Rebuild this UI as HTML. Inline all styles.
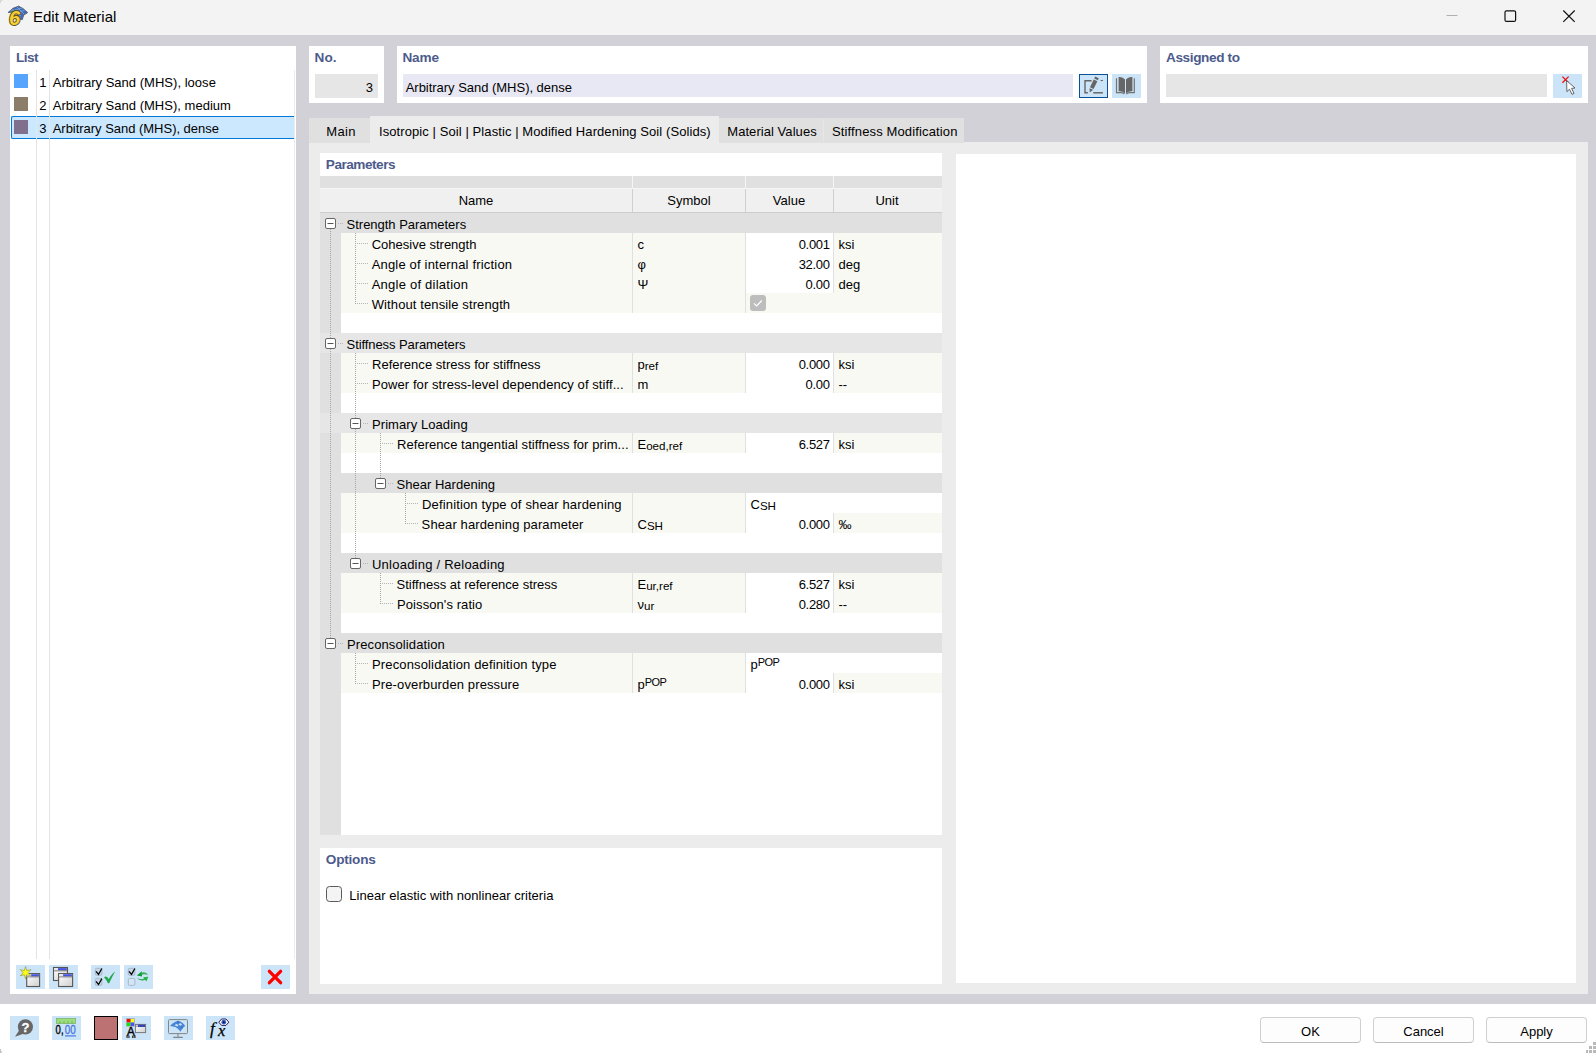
<!DOCTYPE html>
<html><head><meta charset="utf-8"><title>Edit Material</title>
<style>
html,body{margin:0;padding:0;}
body{width:1596px;height:1053px;overflow:hidden;background:#d1d1d7;font-family:"Liberation Sans",sans-serif;color:#000;position:relative;}
#w{position:absolute;left:0;top:0;width:1596px;height:1053px;overflow:hidden;}
#w div{position:absolute;box-sizing:border-box;}
#w svg{position:absolute;overflow:visible;}
.t{position:absolute;white-space:nowrap;}
.h{font-weight:bold;color:#4d5b8c;}
sub{font-size:11.6px;vertical-align:-1px;line-height:0;}
sup{font-size:11px;vertical-align:3px;letter-spacing:-0.6px;line-height:0;}
</style></head>
<body><div id="w">
<div style="left:0px;top:0px;width:1596px;height:35px;background:#f3f3f3;"></div>
<span class="t " style="top:9px;line-height:16px;font-size:15px;left:33px;">Edit Material</span>
<svg style="left:1440px;top:8px" width="150" height="20" viewBox="0 0 150 20"><path d="M6.5 7.5h11" stroke="#b0b0b0" stroke-width="1" fill="none"/><rect x="65" y="2.8" width="10.6" height="10.6" rx="1.5" stroke="#111" stroke-width="1.2" fill="none"/><path d="M123.3 2.5l11.4 11.4M134.7 2.5l-11.4 11.4" stroke="#111" stroke-width="1.2" fill="none"/></svg>
<div style="left:10px;top:46px;width:286px;height:948px;background:#fff;"></div>
<span class="t h" style="top:50px;line-height:16px;font-size:13.6px;left:15.9px;letter-spacing:-0.519px;">List</span>
<div style="left:36px;top:70px;width:1px;height:889px;background:#e3e3e3;"></div>
<div style="left:49px;top:70px;width:1px;height:889px;background:#e3e3e3;"></div>
<div style="left:11px;top:116px;width:283px;height:23px;background:#cce8ff;border-top:1px solid #0078d7;border-bottom:1px solid #0078d7;border-left:1px solid #0078d7;border-radius:2px 0 0 2px;"></div>
<div style="left:14px;top:74px;width:14px;height:14px;background:#55a5ff;"></div>
<span class="t " style="top:75px;line-height:16px;font-size:13px;right:1549.5px;">1</span>
<span class="t " style="top:75px;line-height:16px;font-size:13px;left:52.7px;letter-spacing:0.024px;">Arbitrary Sand (MHS), loose</span>
<div style="left:14px;top:97px;width:14px;height:14px;background:#8b7d69;"></div>
<span class="t " style="top:98px;line-height:16px;font-size:13px;right:1549.5px;">2</span>
<span class="t " style="top:98px;line-height:16px;font-size:13px;left:52.7px;letter-spacing:0.018px;">Arbitrary Sand (MHS), medium</span>
<div style="left:14px;top:120px;width:14px;height:14px;background:#80708e;"></div>
<span class="t " style="top:121px;line-height:16px;font-size:13px;right:1549.5px;">3</span>
<span class="t " style="top:121px;line-height:16px;font-size:13px;left:52.7px;letter-spacing:-0.025px;">Arbitrary Sand (MHS), dense</span>
<div style="left:294px;top:70px;width:1px;height:889px;background:#ececec;"></div>
<div style="left:36px;top:116px;width:1px;height:23px;background:#e1e8ef;"></div>
<div style="left:49px;top:116px;width:1px;height:23px;background:#e1e8ef;"></div>
<div style="left:16px;top:965px;width:29px;height:24px;background:#cce4f7;"></div>
<div style="left:49px;top:965px;width:29px;height:24px;background:#cce4f7;"></div>
<div style="left:91px;top:965px;width:29px;height:24px;background:#cce4f7;"></div>
<div style="left:124px;top:965px;width:29px;height:24px;background:#cce4f7;"></div>
<div style="left:261px;top:965px;width:29px;height:24px;background:#cce4f7;"></div>
<div style="left:309px;top:46px;width:75px;height:57px;background:#fff;"></div>
<span class="t h" style="top:50px;line-height:16px;font-size:13.6px;left:314.5px;letter-spacing:0.064px;">No.</span>
<div style="left:315px;top:74px;width:63px;height:24px;background:#e6e6e6;"></div>
<span class="t " style="top:80px;line-height:16px;font-size:13px;right:1223px;">3</span>
<div style="left:397px;top:46px;width:750px;height:57px;background:#fff;"></div>
<span class="t h" style="top:50px;line-height:16px;font-size:13.6px;left:402.4px;letter-spacing:-0.085px;">Name</span>
<div style="left:403px;top:74px;width:670px;height:23px;background:#e8e8f4;"></div>
<span class="t " style="top:80px;line-height:16px;font-size:13px;left:405.7px;letter-spacing:-0.025px;">Arbitrary Sand (MHS), dense</span>
<div style="left:1079px;top:74px;width:29px;height:24px;background:#cce4f7;border:1px solid #0a4f9a;"></div>
<div style="left:1112px;top:74px;width:29px;height:24px;background:#cce4f7;"></div>
<div style="left:1160px;top:46px;width:428px;height:57px;background:#fff;"></div>
<span class="t h" style="top:50px;line-height:16px;font-size:13.6px;left:1166px;letter-spacing:-0.384px;">Assigned to</span>
<div style="left:1166px;top:74px;width:381px;height:23px;background:#e6e6e6;"></div>
<div style="left:1553px;top:74px;width:29px;height:24px;background:#cce4f7;"></div>
<div style="left:309px;top:142px;width:1279px;height:852px;background:#ececec;"></div>
<div style="left:309px;top:118px;width:655px;height:25px;background:#e0e0e0;"></div>
<div style="left:823px;top:119px;width:1px;height:23px;background:#e7e7e7;"></div>
<div style="left:370px;top:116px;width:349px;height:28px;background:#ececec;"></div>
<span class="t " style="top:124px;line-height:16px;font-size:13px;left:326.3px;letter-spacing:0.306px;">Main</span>
<span class="t " style="top:124px;line-height:16px;font-size:13px;left:379.0px;letter-spacing:0.084px;">Isotropic | Soil | Plastic | Modified Hardening Soil (Solids)</span>
<span class="t " style="top:124px;line-height:16px;font-size:13px;left:727.3px;letter-spacing:0.052px;">Material Values</span>
<span class="t " style="top:124px;line-height:16px;font-size:13px;left:832.0px;letter-spacing:0.132px;">Stiffness Modification</span>
<div style="left:956px;top:154px;width:620px;height:829px;background:#fff;"></div>
<div style="left:320px;top:153px;width:622px;height:682px;background:#fff;"></div>
<span class="t h" style="top:157px;line-height:16px;font-size:13.6px;left:325.8px;letter-spacing:-0.479px;">Parameters</span>
<div style="left:320px;top:176px;width:622px;height:12px;background:#e0e0e0;"></div>
<div style="left:632px;top:176px;width:1px;height:12px;background:#f5f5f5;"></div>
<div style="left:745px;top:176px;width:1px;height:12px;background:#f5f5f5;"></div>
<div style="left:833px;top:176px;width:1px;height:12px;background:#f5f5f5;"></div>
<div style="left:320px;top:188px;width:622px;height:24px;background:#f0f0f0;"></div>
<div style="left:320px;top:188px;width:622px;height:1px;background:#f6f6f6;"></div>
<div style="left:632px;top:189px;width:1px;height:23px;background:#d0d0d0;"></div>
<div style="left:745px;top:189px;width:1px;height:23px;background:#d0d0d0;"></div>
<div style="left:833px;top:189px;width:1px;height:23px;background:#d0d0d0;"></div>
<div style="left:320px;top:212px;width:622px;height:1px;background:#cdcdcd;"></div>
<span class="t " style="top:193px;line-height:16px;font-size:13px;left:326px;width:300px;text-align:center;">Name</span>
<span class="t " style="top:193px;line-height:16px;font-size:13px;left:539px;width:300px;text-align:center;">Symbol</span>
<span class="t " style="top:193px;line-height:16px;font-size:13px;left:639px;width:300px;text-align:center;">Value</span>
<span class="t " style="top:193px;line-height:16px;font-size:13px;left:737px;width:300px;text-align:center;">Unit</span>
<div style="left:320px;top:213px;width:21px;height:622px;background:#e0e0e0;"></div>
<div style="left:320px;top:213px;width:622px;height:20px;background:#e0e0e0;"></div>
<span class="t " style="top:217px;line-height:16px;font-size:13px;left:346.6px;letter-spacing:-0.023px;">Strength Parameters</span>
<div style="left:341px;top:233px;width:601px;height:20px;background:#f9f9f4;"></div>
<div style="left:632px;top:233px;width:1px;height:20px;background:#e0e0e0;"></div>
<div style="left:745px;top:233px;width:1px;height:20px;background:#e0e0e0;"></div>
<span class="t " style="top:237px;line-height:16px;font-size:13px;left:371.7px;letter-spacing:-0.004px;">Cohesive strength</span>
<div style="left:746px;top:233px;width:87px;height:20px;background:#fff;"></div>
<div style="left:833px;top:233px;width:1px;height:20px;background:#e0e0e0;"></div>
<span class="t " style="top:237px;line-height:16px;font-size:13px;left:637.5px;">c</span>
<span class="t " style="top:237px;line-height:16px;font-size:13px;right:766.3px;letter-spacing:-0.3px;">0.001</span>
<span class="t " style="top:237px;line-height:16px;font-size:13px;left:838.5px;">ksi</span>
<div style="left:341px;top:253px;width:601px;height:20px;background:#f9f9f4;"></div>
<div style="left:632px;top:253px;width:1px;height:20px;background:#e0e0e0;"></div>
<div style="left:745px;top:253px;width:1px;height:20px;background:#e0e0e0;"></div>
<span class="t " style="top:257px;line-height:16px;font-size:13px;left:371.7px;letter-spacing:0.179px;">Angle of internal friction</span>
<div style="left:746px;top:253px;width:87px;height:20px;background:#fff;"></div>
<div style="left:833px;top:253px;width:1px;height:20px;background:#e0e0e0;"></div>
<span class="t " style="top:257px;line-height:16px;font-size:13px;left:637.5px;">φ</span>
<span class="t " style="top:257px;line-height:16px;font-size:13px;right:766.3px;letter-spacing:-0.3px;">32.00</span>
<span class="t " style="top:257px;line-height:16px;font-size:13px;left:838.5px;">deg</span>
<div style="left:341px;top:273px;width:601px;height:20px;background:#f9f9f4;"></div>
<div style="left:632px;top:273px;width:1px;height:20px;background:#e0e0e0;"></div>
<div style="left:745px;top:273px;width:1px;height:20px;background:#e0e0e0;"></div>
<span class="t " style="top:277px;line-height:16px;font-size:13px;left:371.7px;letter-spacing:0.235px;">Angle of dilation</span>
<div style="left:746px;top:273px;width:87px;height:20px;background:#fff;"></div>
<div style="left:833px;top:273px;width:1px;height:20px;background:#e0e0e0;"></div>
<span class="t " style="top:277px;line-height:16px;font-size:13px;left:637.5px;">Ψ</span>
<span class="t " style="top:277px;line-height:16px;font-size:13px;right:766.3px;letter-spacing:-0.3px;">0.00</span>
<span class="t " style="top:277px;line-height:16px;font-size:13px;left:838.5px;">deg</span>
<div style="left:341px;top:293px;width:601px;height:20px;background:#f9f9f4;"></div>
<div style="left:632px;top:293px;width:1px;height:20px;background:#e0e0e0;"></div>
<div style="left:745px;top:293px;width:1px;height:20px;background:#e0e0e0;"></div>
<span class="t " style="top:297px;line-height:16px;font-size:13px;left:371.7px;letter-spacing:0.111px;">Without tensile strength</span>
<svg style="left:750px;top:295px" width="16" height="16" viewBox="0 0 16 16"><rect x="0" y="0" width="16" height="16" rx="3" fill="#bdbdbd"/><path d="M4 8.3l2.6 2.6 5.2-5.4" stroke="#fff" stroke-width="1.2" fill="none"/></svg>
<div style="left:320px;top:333px;width:622px;height:20px;background:#e6e6e6;"></div>
<span class="t " style="top:337px;line-height:16px;font-size:13px;left:346.6px;letter-spacing:-0.086px;">Stiffness Parameters</span>
<div style="left:341px;top:353px;width:601px;height:20px;background:#f9f9f4;"></div>
<div style="left:632px;top:353px;width:1px;height:20px;background:#e0e0e0;"></div>
<div style="left:745px;top:353px;width:1px;height:20px;background:#e0e0e0;"></div>
<span class="t " style="top:357px;line-height:16px;font-size:13px;left:372.0px;letter-spacing:0.017px;">Reference stress for stiffness</span>
<div style="left:746px;top:353px;width:87px;height:20px;background:#fff;"></div>
<div style="left:833px;top:353px;width:1px;height:20px;background:#e0e0e0;"></div>
<span class="t " style="top:357px;line-height:16px;font-size:13px;left:637.5px;">p<sub>ref</sub></span>
<span class="t " style="top:357px;line-height:16px;font-size:13px;right:766.3px;letter-spacing:-0.3px;">0.000</span>
<span class="t " style="top:357px;line-height:16px;font-size:13px;left:838.5px;">ksi</span>
<div style="left:341px;top:373px;width:601px;height:20px;background:#f9f9f4;"></div>
<div style="left:632px;top:373px;width:1px;height:20px;background:#e0e0e0;"></div>
<div style="left:745px;top:373px;width:1px;height:20px;background:#e0e0e0;"></div>
<span class="t " style="top:377px;line-height:16px;font-size:13px;left:372.0px;letter-spacing:0.075px;">Power for stress-level dependency of stiff...</span>
<div style="left:746px;top:373px;width:87px;height:20px;background:#fff;"></div>
<div style="left:833px;top:373px;width:1px;height:20px;background:#e0e0e0;"></div>
<span class="t " style="top:377px;line-height:16px;font-size:13px;left:637.5px;">m</span>
<span class="t " style="top:377px;line-height:16px;font-size:13px;right:766.3px;letter-spacing:-0.3px;">0.00</span>
<span class="t " style="top:377px;line-height:16px;font-size:13px;left:838.5px;">--</span>
<div style="left:320px;top:413px;width:622px;height:20px;background:#e6e6e6;"></div>
<span class="t " style="top:417px;line-height:16px;font-size:13px;left:372.0px;letter-spacing:0.070px;">Primary Loading</span>
<div style="left:341px;top:433px;width:601px;height:20px;background:#f9f9f4;"></div>
<div style="left:632px;top:433px;width:1px;height:20px;background:#e0e0e0;"></div>
<div style="left:745px;top:433px;width:1px;height:20px;background:#e0e0e0;"></div>
<span class="t " style="top:437px;line-height:16px;font-size:13px;left:397.0px;letter-spacing:0.049px;">Reference tangential stiffness for prim...</span>
<div style="left:746px;top:433px;width:87px;height:20px;background:#fff;"></div>
<div style="left:833px;top:433px;width:1px;height:20px;background:#e0e0e0;"></div>
<span class="t " style="top:437px;line-height:16px;font-size:13px;left:637.5px;">E<sub>oed,ref</sub></span>
<span class="t " style="top:437px;line-height:16px;font-size:13px;right:766.3px;letter-spacing:-0.3px;">6.527</span>
<span class="t " style="top:437px;line-height:16px;font-size:13px;left:838.5px;">ksi</span>
<div style="left:341px;top:473px;width:601px;height:20px;background:#e0e0e0;"></div>
<span class="t " style="top:477px;line-height:16px;font-size:13px;left:396.6px;letter-spacing:0.008px;">Shear Hardening</span>
<div style="left:341px;top:493px;width:601px;height:20px;background:#f9f9f4;"></div>
<div style="left:632px;top:493px;width:1px;height:20px;background:#e0e0e0;"></div>
<div style="left:745px;top:493px;width:1px;height:20px;background:#e0e0e0;"></div>
<span class="t " style="top:497px;line-height:16px;font-size:13px;left:422.0px;letter-spacing:0.156px;">Definition type of shear hardening</span>
<div style="left:746px;top:493px;width:196px;height:20px;background:#fff;"></div>
<span class="t " style="top:497px;line-height:16px;font-size:13px;left:750.5px;">C<sub>SH</sub></span>
<div style="left:341px;top:513px;width:601px;height:20px;background:#f9f9f4;"></div>
<div style="left:632px;top:513px;width:1px;height:20px;background:#e0e0e0;"></div>
<div style="left:745px;top:513px;width:1px;height:20px;background:#e0e0e0;"></div>
<span class="t " style="top:517px;line-height:16px;font-size:13px;left:421.6px;letter-spacing:0.117px;">Shear hardening parameter</span>
<div style="left:746px;top:513px;width:87px;height:20px;background:#fff;"></div>
<div style="left:833px;top:513px;width:1px;height:20px;background:#e0e0e0;"></div>
<span class="t " style="top:517px;line-height:16px;font-size:13px;left:637.5px;">C<sub>SH</sub></span>
<span class="t " style="top:517px;line-height:16px;font-size:13px;right:766.3px;letter-spacing:-0.3px;">0.000</span>
<span class="t " style="top:517px;line-height:16px;font-size:13px;left:838.5px;">‰</span>
<div style="left:341px;top:553px;width:601px;height:20px;background:#e0e0e0;"></div>
<span class="t " style="top:557px;line-height:16px;font-size:13px;left:372.0px;letter-spacing:0.233px;">Unloading / Reloading</span>
<div style="left:341px;top:573px;width:601px;height:20px;background:#f9f9f4;"></div>
<div style="left:632px;top:573px;width:1px;height:20px;background:#e0e0e0;"></div>
<div style="left:745px;top:573px;width:1px;height:20px;background:#e0e0e0;"></div>
<span class="t " style="top:577px;line-height:16px;font-size:13px;left:396.6px;letter-spacing:-0.006px;">Stiffness at reference stress</span>
<div style="left:746px;top:573px;width:87px;height:20px;background:#fff;"></div>
<div style="left:833px;top:573px;width:1px;height:20px;background:#e0e0e0;"></div>
<span class="t " style="top:577px;line-height:16px;font-size:13px;left:637.5px;">E<sub>ur,ref</sub></span>
<span class="t " style="top:577px;line-height:16px;font-size:13px;right:766.3px;letter-spacing:-0.3px;">6.527</span>
<span class="t " style="top:577px;line-height:16px;font-size:13px;left:838.5px;">ksi</span>
<div style="left:341px;top:593px;width:601px;height:20px;background:#f9f9f4;"></div>
<div style="left:632px;top:593px;width:1px;height:20px;background:#e0e0e0;"></div>
<div style="left:745px;top:593px;width:1px;height:20px;background:#e0e0e0;"></div>
<span class="t " style="top:597px;line-height:16px;font-size:13px;left:397.0px;letter-spacing:0.085px;">Poisson's ratio</span>
<div style="left:746px;top:593px;width:87px;height:20px;background:#fff;"></div>
<div style="left:833px;top:593px;width:1px;height:20px;background:#e0e0e0;"></div>
<span class="t " style="top:597px;line-height:16px;font-size:13px;left:637.5px;">ν<sub>ur</sub></span>
<span class="t " style="top:597px;line-height:16px;font-size:13px;right:766.3px;letter-spacing:-0.3px;">0.280</span>
<span class="t " style="top:597px;line-height:16px;font-size:13px;left:838.5px;">--</span>
<div style="left:320px;top:633px;width:622px;height:20px;background:#e0e0e0;"></div>
<span class="t " style="top:637px;line-height:16px;font-size:13px;left:347.0px;letter-spacing:0.112px;">Preconsolidation</span>
<div style="left:341px;top:653px;width:601px;height:20px;background:#f9f9f4;"></div>
<div style="left:632px;top:653px;width:1px;height:20px;background:#e0e0e0;"></div>
<div style="left:745px;top:653px;width:1px;height:20px;background:#e0e0e0;"></div>
<span class="t " style="top:657px;line-height:16px;font-size:13px;left:372.0px;letter-spacing:0.143px;">Preconsolidation definition type</span>
<div style="left:746px;top:653px;width:196px;height:20px;background:#fff;"></div>
<span class="t " style="top:657px;line-height:16px;font-size:13px;left:750.5px;">p<sup>POP</sup></span>
<div style="left:341px;top:673px;width:601px;height:20px;background:#f9f9f4;"></div>
<div style="left:632px;top:673px;width:1px;height:20px;background:#e0e0e0;"></div>
<div style="left:745px;top:673px;width:1px;height:20px;background:#e0e0e0;"></div>
<span class="t " style="top:677px;line-height:16px;font-size:13px;left:372.0px;letter-spacing:0.126px;">Pre-overburden pressure</span>
<div style="left:746px;top:673px;width:87px;height:20px;background:#fff;"></div>
<div style="left:833px;top:673px;width:1px;height:20px;background:#e0e0e0;"></div>
<span class="t " style="top:677px;line-height:16px;font-size:13px;left:637.5px;">p<sup>POP</sup></span>
<span class="t " style="top:677px;line-height:16px;font-size:13px;right:766.3px;letter-spacing:-0.3px;">0.000</span>
<span class="t " style="top:677px;line-height:16px;font-size:13px;left:838.5px;">ksi</span>
<div style="left:338px;top:223px;width:5px;height:1px;background:repeating-linear-gradient(to right,#b6b6b6 0 1px,transparent 1px 2px);"></div>
<div style="left:357px;top:243px;width:11px;height:1px;background:repeating-linear-gradient(to right,#b6b6b6 0 1px,transparent 1px 2px);"></div>
<div style="left:357px;top:263px;width:11px;height:1px;background:repeating-linear-gradient(to right,#b6b6b6 0 1px,transparent 1px 2px);"></div>
<div style="left:357px;top:283px;width:11px;height:1px;background:repeating-linear-gradient(to right,#b6b6b6 0 1px,transparent 1px 2px);"></div>
<div style="left:357px;top:303px;width:11px;height:1px;background:repeating-linear-gradient(to right,#b6b6b6 0 1px,transparent 1px 2px);"></div>
<div style="left:338px;top:343px;width:5px;height:1px;background:repeating-linear-gradient(to right,#b6b6b6 0 1px,transparent 1px 2px);"></div>
<div style="left:357px;top:363px;width:11px;height:1px;background:repeating-linear-gradient(to right,#b6b6b6 0 1px,transparent 1px 2px);"></div>
<div style="left:357px;top:383px;width:11px;height:1px;background:repeating-linear-gradient(to right,#b6b6b6 0 1px,transparent 1px 2px);"></div>
<div style="left:363px;top:423px;width:5px;height:1px;background:repeating-linear-gradient(to right,#b6b6b6 0 1px,transparent 1px 2px);"></div>
<div style="left:382px;top:443px;width:11px;height:1px;background:repeating-linear-gradient(to right,#b6b6b6 0 1px,transparent 1px 2px);"></div>
<div style="left:388px;top:483px;width:5px;height:1px;background:repeating-linear-gradient(to right,#b6b6b6 0 1px,transparent 1px 2px);"></div>
<div style="left:407px;top:503px;width:11px;height:1px;background:repeating-linear-gradient(to right,#b6b6b6 0 1px,transparent 1px 2px);"></div>
<div style="left:407px;top:523px;width:11px;height:1px;background:repeating-linear-gradient(to right,#b6b6b6 0 1px,transparent 1px 2px);"></div>
<div style="left:363px;top:563px;width:5px;height:1px;background:repeating-linear-gradient(to right,#b6b6b6 0 1px,transparent 1px 2px);"></div>
<div style="left:382px;top:583px;width:11px;height:1px;background:repeating-linear-gradient(to right,#b6b6b6 0 1px,transparent 1px 2px);"></div>
<div style="left:382px;top:603px;width:11px;height:1px;background:repeating-linear-gradient(to right,#b6b6b6 0 1px,transparent 1px 2px);"></div>
<div style="left:338px;top:643px;width:5px;height:1px;background:repeating-linear-gradient(to right,#b6b6b6 0 1px,transparent 1px 2px);"></div>
<div style="left:357px;top:663px;width:11px;height:1px;background:repeating-linear-gradient(to right,#b6b6b6 0 1px,transparent 1px 2px);"></div>
<div style="left:357px;top:683px;width:11px;height:1px;background:repeating-linear-gradient(to right,#b6b6b6 0 1px,transparent 1px 2px);"></div>
<div style="left:330px;top:229px;width:1px;height:409px;background:repeating-linear-gradient(to bottom,#a6a6a6 0 1px,transparent 1px 2px);"></div>
<div style="left:355px;top:233px;width:1px;height:71px;background:repeating-linear-gradient(to bottom,#a6a6a6 0 1px,transparent 1px 2px);"></div>
<div style="left:355px;top:353px;width:1px;height:205px;background:repeating-linear-gradient(to bottom,#a6a6a6 0 1px,transparent 1px 2px);"></div>
<div style="left:380px;top:433px;width:1px;height:45px;background:repeating-linear-gradient(to bottom,#a6a6a6 0 1px,transparent 1px 2px);"></div>
<div style="left:405px;top:493px;width:1px;height:31px;background:repeating-linear-gradient(to bottom,#a6a6a6 0 1px,transparent 1px 2px);"></div>
<div style="left:380px;top:573px;width:1px;height:31px;background:repeating-linear-gradient(to bottom,#a6a6a6 0 1px,transparent 1px 2px);"></div>
<div style="left:355px;top:653px;width:1px;height:31px;background:repeating-linear-gradient(to bottom,#a6a6a6 0 1px,transparent 1px 2px);"></div>
<svg style="left:325px;top:218px" width="11" height="11" viewBox="0 0 11 11"><rect x="0.5" y="0.5" width="10" height="10" rx="1.5" fill="#fff" stroke="#666" stroke-width="1"/><path d="M2.5 5.5h6" stroke="#555" stroke-width="1"/></svg>
<svg style="left:325px;top:338px" width="11" height="11" viewBox="0 0 11 11"><rect x="0.5" y="0.5" width="10" height="10" rx="1.5" fill="#fff" stroke="#666" stroke-width="1"/><path d="M2.5 5.5h6" stroke="#555" stroke-width="1"/></svg>
<svg style="left:350px;top:418px" width="11" height="11" viewBox="0 0 11 11"><rect x="0.5" y="0.5" width="10" height="10" rx="1.5" fill="#fff" stroke="#666" stroke-width="1"/><path d="M2.5 5.5h6" stroke="#555" stroke-width="1"/></svg>
<svg style="left:375px;top:478px" width="11" height="11" viewBox="0 0 11 11"><rect x="0.5" y="0.5" width="10" height="10" rx="1.5" fill="#fff" stroke="#666" stroke-width="1"/><path d="M2.5 5.5h6" stroke="#555" stroke-width="1"/></svg>
<svg style="left:350px;top:558px" width="11" height="11" viewBox="0 0 11 11"><rect x="0.5" y="0.5" width="10" height="10" rx="1.5" fill="#fff" stroke="#666" stroke-width="1"/><path d="M2.5 5.5h6" stroke="#555" stroke-width="1"/></svg>
<svg style="left:325px;top:638px" width="11" height="11" viewBox="0 0 11 11"><rect x="0.5" y="0.5" width="10" height="10" rx="1.5" fill="#fff" stroke="#666" stroke-width="1"/><path d="M2.5 5.5h6" stroke="#555" stroke-width="1"/></svg>
<div style="left:320px;top:848px;width:622px;height:136px;background:#fff;"></div>
<span class="t h" style="top:852px;line-height:16px;font-size:13.6px;left:325.8px;letter-spacing:-0.224px;">Options</span>
<div style="left:326px;top:886px;width:16px;height:16px;background:#f4f4f4;border:1px solid #5a5a5a;border-radius:3.5px;"></div>
<span class="t " style="top:888px;line-height:16px;font-size:13px;left:349.3px;letter-spacing:0.028px;">Linear elastic with nonlinear criteria</span>
<div style="left:0px;top:1004px;width:1596px;height:49px;background:#ffffff;"></div>
<div style="left:10px;top:1016px;width:29px;height:24px;background:#cce4f7;"></div>
<div style="left:52px;top:1016px;width:29px;height:24px;background:#cce4f7;"></div>
<div style="left:122px;top:1016px;width:29px;height:24px;background:#cce4f7;"></div>
<div style="left:164px;top:1016px;width:29px;height:24px;background:#cce4f7;"></div>
<div style="left:206px;top:1016px;width:29px;height:24px;background:#cce4f7;"></div>
<div style="left:94px;top:1016px;width:24px;height:24px;background:#bc7272;border:1px solid #000;"></div>
<div style="left:1260px;top:1017px;width:101px;height:26px;background:#fdfdfd;border:1px solid #d0d0d0;border-bottom-color:#bcbcbc;border-radius:4px;"></div>
<span class="t " style="top:1024px;line-height:16px;font-size:13px;left:1160.5px;width:300px;text-align:center;">OK</span>
<div style="left:1373px;top:1017px;width:101px;height:26px;background:#fdfdfd;border:1px solid #d0d0d0;border-bottom-color:#bcbcbc;border-radius:4px;"></div>
<span class="t " style="top:1024px;line-height:16px;font-size:13px;left:1273.5px;width:300px;text-align:center;">Cancel</span>
<div style="left:1486px;top:1017px;width:101px;height:26px;background:#fdfdfd;border:1px solid #d0d0d0;border-bottom-color:#bcbcbc;border-radius:4px;"></div>
<span class="t " style="top:1024px;line-height:16px;font-size:13px;left:1386.5px;width:300px;text-align:center;">Apply</span>
<div style="left:0px;top:0px;width:1px;height:3px;background:#d6d6d6;"></div>
<div style="left:1px;top:0px;width:2px;height:1px;background:#dcdcdc;"></div>
<div style="left:0px;top:1049px;width:1px;height:4px;background:#c4c4c4;"></div>
<div style="left:1px;top:1051px;width:1px;height:2px;background:#d0d0d0;"></div>
<svg style="left:0;top:0" width="1596" height="1053" viewBox="0 0 1596 1053"><defs><linearGradient id="wg" x1="0" y1="0" x2="1" y2="1"><stop offset="0" stop-color="#fff"/><stop offset="1" stop-color="#cfcfcf"/></linearGradient><linearGradient id="gg" x1="0" y1="0" x2="1" y2="0"><stop offset="0" stop-color="#0a8a2a"/><stop offset="1" stop-color="#55cc66"/></linearGradient></defs><path d="M8 12.6 L13 8.3 L18.6 6.2 L23 8.6 L27.6 12.6 L23.6 15.2 L22.3 19.6 L19.5 19 L17.5 12.5 L12 12 Z" fill="#406cb4" stroke="#566078" stroke-width="1"/><path d="M12 9.2l9 7M17 7l7 7M10.5 11l12-3M14 12.5l10.5-2" stroke="#7fb0e8" stroke-width="0.7" fill="none"/><text x="8.9" y="25.2" font-family="Liberation Sans, sans-serif" font-weight="bold" font-style="italic" font-size="20" fill="#f6d02f" stroke="#5d4f25" stroke-width="1.9" stroke-linejoin="round" paint-order="stroke">6</text><rect x="26.7" y="973.6" width="12.900000000000002" height="12.899999999999977" fill="url(#wg)" stroke="#555" stroke-width="1.1"/><rect x="27.2" y="974.1" width="11.900000000000002" height="2.6" fill="#e8e8e8"/><rect x="31.2" y="974.2" width="7.700000000000002" height="2.2" fill="#4455dd"/><path d="M27.2 976.9000000000001H39.1" stroke="#666" stroke-width="0.8"/><polygon points="25.60,966.50 26.80,970.62 30.97,969.60 28.00,972.70 30.97,975.80 26.80,974.78 25.60,978.90 24.40,974.78 20.23,975.80 23.20,972.70 20.23,969.60 24.40,970.62" fill="#ffff10" stroke="#8a8a50" stroke-width="0.6"/><rect x="53.5" y="967.5" width="14.0" height="13.0" fill="url(#wg)" stroke="#555" stroke-width="1.1"/><rect x="54.0" y="968.0" width="13.0" height="2.6" fill="#e8e8e8"/><rect x="58.0" y="968.1" width="8.8" height="2.2" fill="#4455dd"/><path d="M54.0 970.8000000000001H67.0" stroke="#666" stroke-width="0.8"/><rect x="58.6" y="973.6" width="13.999999999999993" height="12.899999999999977" fill="url(#wg)" stroke="#555" stroke-width="1.1"/><rect x="59.1" y="974.1" width="12.999999999999993" height="2.6" fill="#e8e8e8"/><rect x="63.1" y="974.2" width="8.799999999999994" height="2.2" fill="#4455dd"/><path d="M59.1 976.9000000000001H72.1" stroke="#666" stroke-width="0.8"/><rect x="95.3" y="968.3" width="6.6" height="7" rx="1.2" fill="#c6d6e6" stroke="#a3b3c4" stroke-width="0.9"/><path d="M96.0 971.3L98.5 974.4L101.89999999999999 968.5" stroke="#000" stroke-width="1.25" fill="none"/><rect x="95.3" y="978.4" width="6.6" height="7" rx="1.2" fill="#c6d6e6" stroke="#a3b3c4" stroke-width="0.9"/><path d="M96.0 981.4L98.5 984.5L101.89999999999999 978.6" stroke="#000" stroke-width="1.25" fill="none"/><path d="M104.1 977.4 C104.8 976.2 106 976.2 107 977 C107.8 977.6 108.4 978.4 108.8 979.2 C110.2 976.2 112.6 973.2 115 971.4 C113.2 974.6 111 979.4 109.2 983.2 L108 983.3 C107 981 105.6 978.8 104.1 977.4 Z" fill="#1fa84a"/><rect x="128.3" y="968.3" width="6.6" height="7" rx="1.2" fill="#c6d6e6" stroke="#a3b3c4" stroke-width="0.9"/><path d="M129.0 971.3L131.5 974.4L134.9 968.5" stroke="#000" stroke-width="1.25" fill="none"/><rect x="128.3" y="978.4" width="6.6" height="7" rx="1.2" fill="#d3e6f6" stroke="#a3b3c4" stroke-width="0.9"/><path d="M136.8 975.6L141.8 971.2L142 976.4Z" fill="#0f9a35"/><path d="M141.4 972.9C143.6 971.5 146.6 972.4 148.2 975.2C146.2 973.9 143.6 973.8 141.6 974.8Z" fill="#35b055"/><path d="M148.3 976.8L143.2 977.2L146.4 981.4Z" fill="#1fb83a"/><path d="M136.9 978.1C139.2 980.4 142.4 981.2 145.4 979.6L144.7 978.3C142.2 979.7 139.4 979.5 136.9 978.1Z" fill="#2aa84a"/><path d="M269.4 971.3L280.6 982.7M280.6 971.3L269.4 982.7" stroke="#ff0000" stroke-width="3.3" stroke-linecap="round"/><path d="M1091.6 80.7H1085V92.8H1087.9" stroke="#666" stroke-width="1.4" fill="none"/><path d="M1093.2 92.8H1102.9" stroke="#666" stroke-width="1.5"/><path d="M1100.6 80.5H1102.9" stroke="#666" stroke-width="1.1"/><path d="M1098.80 78.17L1095.20 76.43L1094.20 78.50L1097.80 80.24ZM1097.36 81.14L1093.76 79.40L1089.98 87.23L1093.58 88.97ZM1093.14 89.87L1089.54 88.13L1089.70 92.40Z" fill="#666"/><path d="M1118.6 77 C1121 76.6 1123.4 77.6 1125 79.4 V93.4 C1123.4 91.8 1121 91 1118.6 91.2Z" fill="#666"/><path d="M1132.4 77 C1130 76.6 1127.6 77.6 1126 79.4 V93.4 C1127.6 91.8 1130 91 1132.4 91.2Z" fill="#666"/><path d="M1116.5 78.2V92.7H1121C1122.4 92.7 1123.6 93.2 1124.4 94M1134.3 78.2V92.7H1129.8C1128.4 92.7 1127.2 93.2 1126.4 94" stroke="#747474" stroke-width="1.2" fill="none"/><path d="M1562.4 76.6L1568.6 82.8M1568.6 76.6L1562.4 82.8" stroke="#ee1111" stroke-width="1.3"/><path d="M1566.6 80.6L1566.9 91.6L1569.5 89.2L1572 94.4L1574 93.4L1571.6 88.4L1575 88Z" fill="#fff" stroke="#444" stroke-width="0.8" stroke-linejoin="round"/><circle cx="25.4" cy="1026.8" r="7.6" fill="#666"/><path d="M19.2 1030.2L15 1036.8L24 1033.6Z" fill="#666"/><text x="25.4" y="1031.7" text-anchor="middle" font-family="Liberation Sans, sans-serif" font-weight="bold" font-size="13" fill="#fff" stroke="#fff" stroke-width="0.3">?</text><rect x="56.4" y="1018.5" width="19.2" height="5" fill="#9ade7c" stroke="#7fb56c" stroke-width="0.8"/><path d="M60 1021.2V1023.5M64 1021.2V1023.5M68 1021.2V1023.5M72 1021.2V1023.5" stroke="#6fa95e" stroke-width="0.9"/><text x="55.6" y="1034.1" font-family="Liberation Sans, sans-serif" font-size="12" fill="#000" stroke="#000" stroke-width="0.35" textLength="8" lengthAdjust="spacingAndGlyphs">0,</text><text x="64.8" y="1034.1" font-family="Liberation Sans, sans-serif" font-size="12" fill="#4a78e0" stroke="#4a78e0" stroke-width="0.35" textLength="11" lengthAdjust="spacingAndGlyphs">00</text><path d="M65 1035.9H76" stroke="#4a78e0" stroke-width="1.2"/><rect x="126.2" y="1018.3" width="8.4" height="8.2" fill="#9a9a9a"/><rect x="126.9" y="1019" width="3.3" height="3.1" fill="#ff0000"/><rect x="130.9" y="1019" width="3.1" height="3.1" fill="#ffff00"/><rect x="126.9" y="1022.9" width="3.3" height="3" fill="#00ee00"/><rect x="130.9" y="1022.9" width="3.1" height="3" fill="#4a4aff"/><text x="126.8" y="1036.4" font-family="Liberation Sans, sans-serif" font-size="13.2" fill="#000" stroke="#000" stroke-width="0.4" textLength="8.2" lengthAdjust="spacingAndGlyphs">A</text><rect x="126.4" y="1035.6" width="3.2" height="2.4" fill="#3a3f46"/><rect x="132" y="1035.6" width="3.6" height="2.4" fill="#3a3f46"/><rect x="127.6" y="1036" width="0.8" height="2" fill="#9aa"/><rect x="133.4" y="1036" width="0.8" height="2" fill="#9aa"/><rect x="135.4" y="1024.4" width="10.2" height="8.2" fill="url(#wg)" stroke="#777" stroke-width="1"/><rect x="135.9" y="1024.6" width="9.2" height="2.4" fill="#3346b4"/><rect x="136" y="1024.8" width="2" height="2" fill="#ccc"/><rect x="168.5" y="1019.6" width="19" height="14" rx="1" fill="none" stroke="#858585" stroke-width="1"/><path d="M178 1033.6V1037M173.2 1037.4H182.8" stroke="#858585" stroke-width="1.1"/><path d="M170 1026 C173 1022.6 176 1021 178.6 1020.8 C181.6 1021.8 184 1024 185.2 1026 C183 1027.6 181.4 1029.6 180.4 1031.8 C179 1029.8 177.4 1028 175.4 1027 C173.6 1026.8 171.6 1026.4 170 1026Z" fill="#4a86d8"/><path d="M174.6 1025.2l2.6 1.2l1.4-1.4l-2.4-1zM180 1023l2 1.6l-1.4 1.2l-2-1.4z" fill="#cfe2f8"/><path d="M177 1021.6l2 1.2M181 1027l1.6 1" stroke="#2b5fa8" stroke-width="0.8"/><text x="210" y="1034.4" font-family="Liberation Serif, serif" font-style="italic" font-size="17.5" fill="#000" stroke="#000" stroke-width="0.25">f</text><text x="218" y="1035.6" font-family="Liberation Serif, serif" font-style="italic" font-size="16.5" fill="#000" stroke="#000" stroke-width="0.25">x</text><path d="M218.8 1022.2L221.6 1019L226 1019L228.8 1022.2L226 1025.4L221.6 1025.4Z" fill="#fff" stroke="#2a1c5c" stroke-width="1"/><circle cx="223.8" cy="1022.2" r="2.4" fill="#3a62c8"/><circle cx="223.8" cy="1022.2" r="1" fill="#0a0a30"/><path d="M1593 1042h3v3h-3zM1589 1046h3v3h-3zM1593 1046h3v3h-3zM1586 1050h2v3h-2zM1589 1050h3v3h-3zM1593 1050h3v3h-3z" fill="#b9b9b9"/></svg>
</div></body></html>
